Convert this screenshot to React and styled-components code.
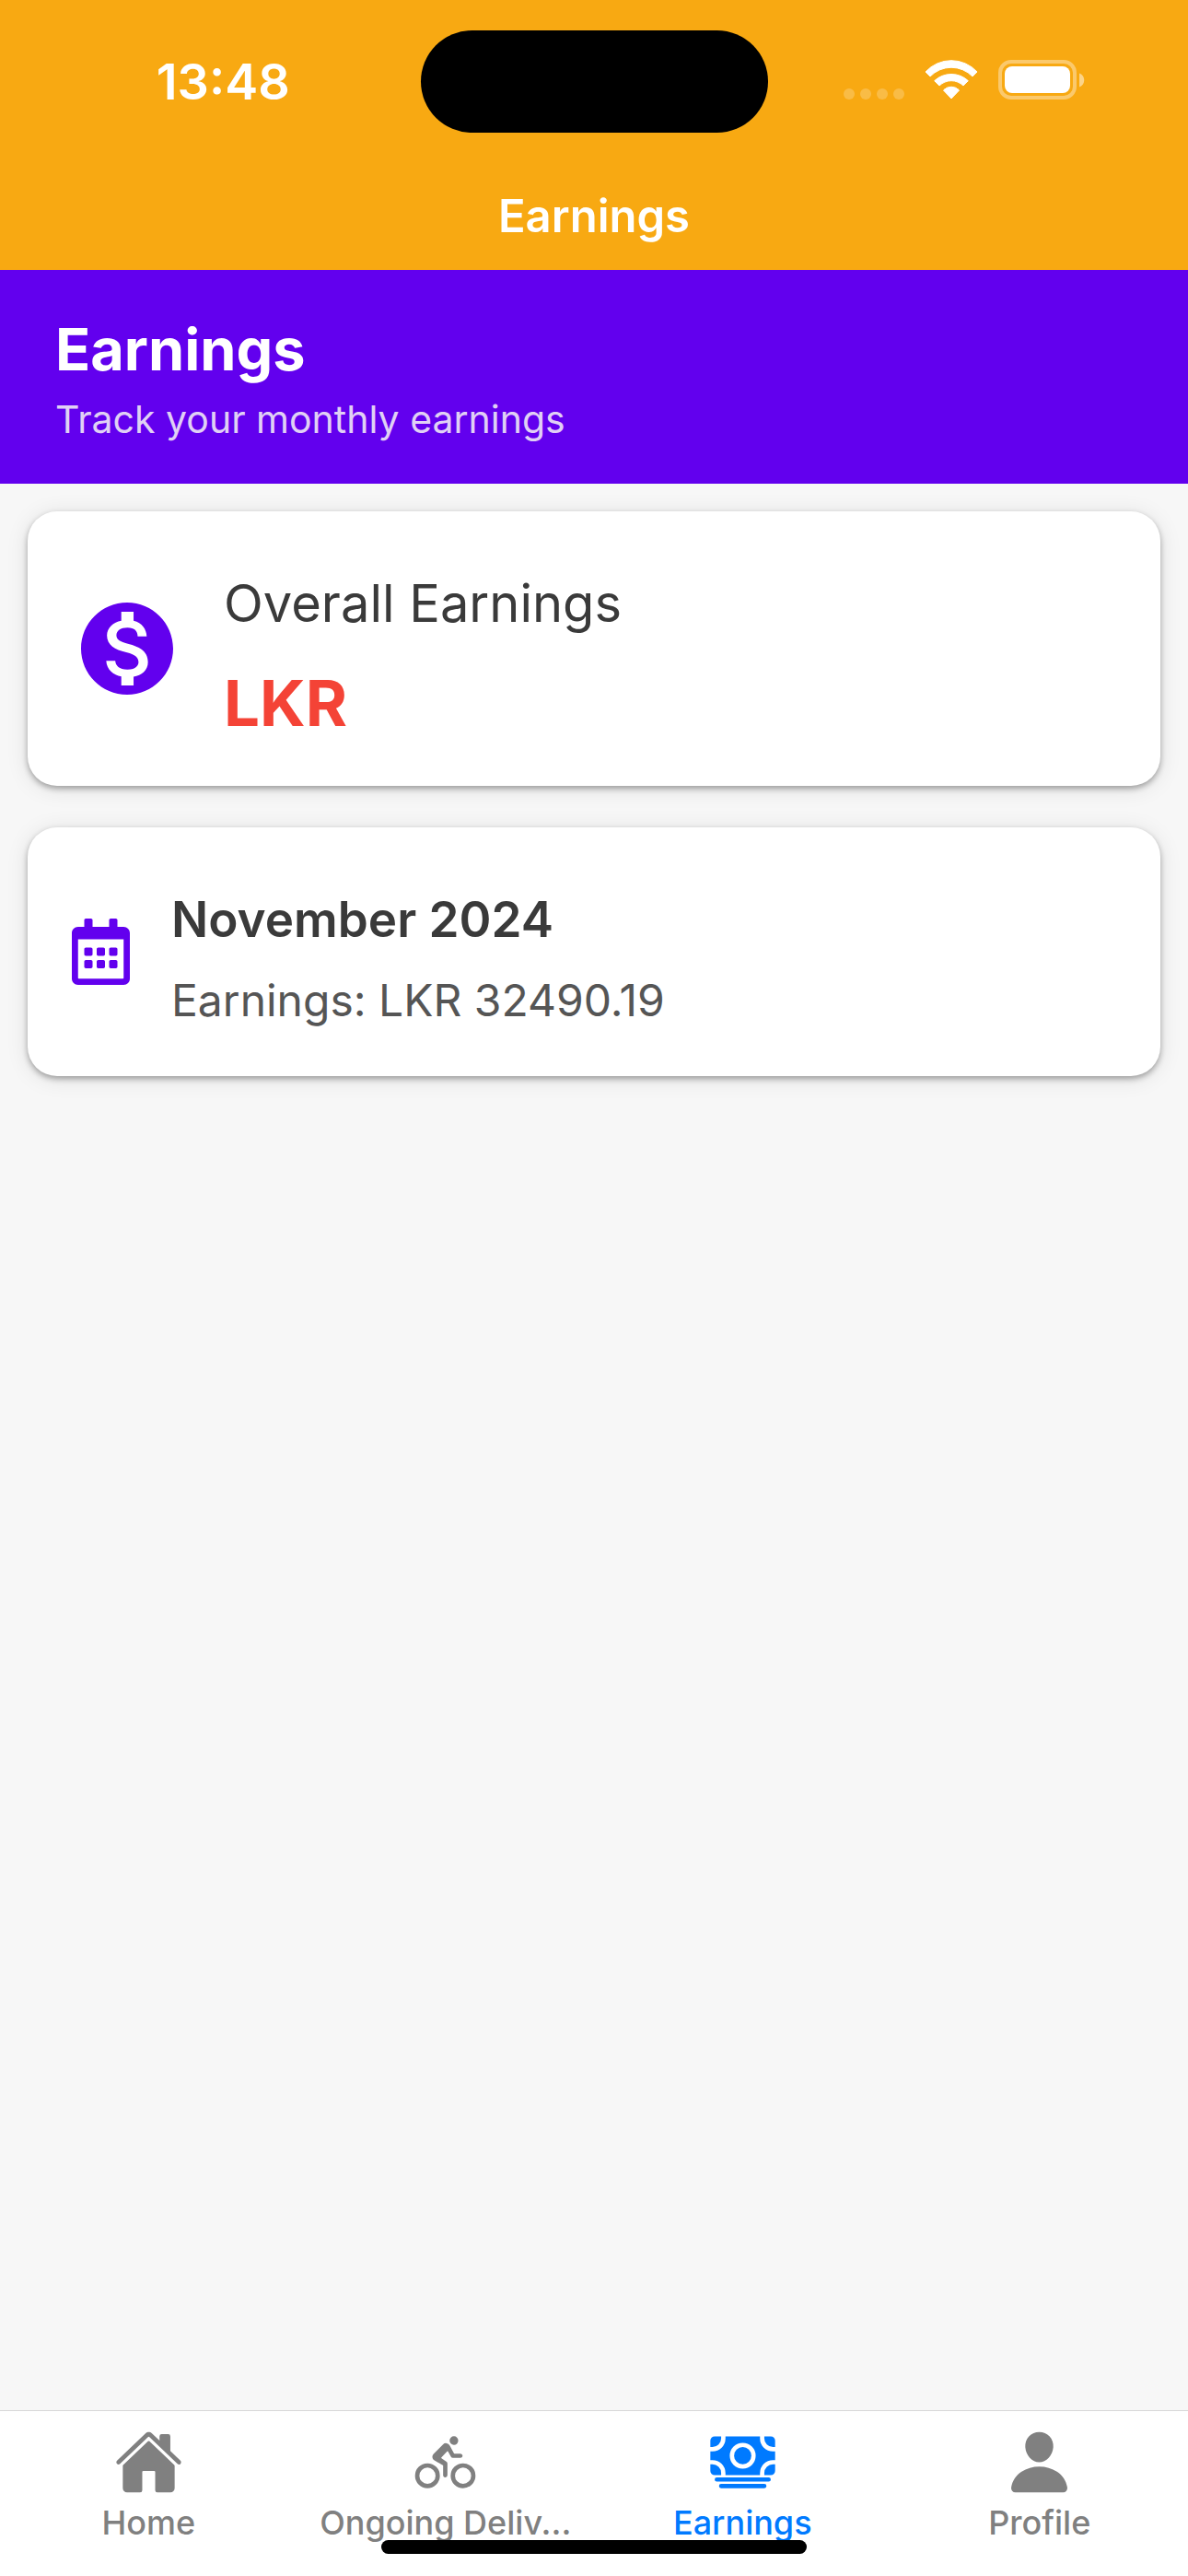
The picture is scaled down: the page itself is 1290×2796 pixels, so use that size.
import React, { useState } from "react";
import styled, { createGlobalStyle } from "styled-components";
import { MdMonetizationOn } from "react-icons/md";
import { FaRegCalendarAlt } from "react-icons/fa";
import { IoHome, IoBicycle, IoCash, IoPerson } from "react-icons/io5";

const colors = {
  header: "#f8a912",
  primary: "#6200ee",
  danger: "#f44336",
  active: "#007aff",
  inactive: "#808080",
  background: "#f7f7f7",
  title: "#3a3a3a",
  text: "#555555",
};

const tabs = [
  { name: "Home", icon: IoHome },
  { name: "Ongoing Deliv...", icon: IoBicycle },
  { name: "Earnings", icon: IoCash },
  { name: "Profile", icon: IoPerson },
];

const months = [{ month: "November 2024", amount: "32490.19" }];

const StatusIcons = () => (
  <StatusIconsStyled>
    <svg width="66" height="12" viewBox="0 0 66 12" fill="#fff" opacity="0.22">
      <circle cx="6" cy="6" r="6" />
      <circle cx="24" cy="6" r="6" />
      <circle cx="42" cy="6" r="6" />
      <circle cx="60" cy="6" r="6" />
    </svg>
    <svg
      width="58"
      height="43"
      viewBox="0 0 58 43"
      fill="#fff"
      stroke="#fff"
      strokeWidth="1"
      strokeLinejoin="round"
    >
      <path d="M1 13A38 38 0 0 1 57 13L52 18A32 32 0 0 0 6 18Z" />
      <path d="M10.700 22.700A26.800 26.800 0 0 1 47.300 22.700L42 28A18.600 18.600 0 0 0 16 28Z" />
      <path d="M20.500 33A11.500 11.500 0 0 1 37.500 33L29 42Z" />
    </svg>
    <svg width="94" height="43" viewBox="0 0 94 43" fill="#fff">
      <rect
        x="2"
        y="2"
        width="81"
        height="39"
        rx="12"
        fill="none"
        stroke="#fff"
        strokeWidth="4"
        opacity="0.38"
      />
      <rect x="7" y="7" width="71" height="29" rx="8" />
      <path d="M88 14.500C95 17 95 27 88 29.500Z" opacity="0.5" />
    </svg>
  </StatusIconsStyled>
);

const App = () => {
  const [active, setActive] = useState("Earnings");

  return (
    <Screen>
      <GlobalStyle />
      <Header>
        <StatusBar>
          <Clock>13:48</Clock>
          <Island />
          <StatusIcons />
        </StatusBar>
        <NavTitle>Earnings</NavTitle>
      </Header>
      <Banner>
        <BannerTitle>Earnings</BannerTitle>
        <BannerSubtitle>Track your monthly earnings</BannerSubtitle>
      </Banner>
      <Content>
        <Card>
          <MdMonetizationOn size={120} />
          <Summary>
            <SummaryTitle>Overall Earnings</SummaryTitle>
            <SummaryAmount>LKR</SummaryAmount>
          </Summary>
        </Card>
        {months.map(({ month, amount }) => (
          <Card key={month}>
            <CalendarIcon />
            <Month>
              <MonthTitle>{month}</MonthTitle>
              <MonthAmount>Earnings: LKR {amount}</MonthAmount>
            </Month>
          </Card>
        ))}
      </Content>
      <TabBar>
        {tabs.map(({ name, icon: Icon }) => (
          <Tab
            key={name}
            type="button"
            $active={active === name}
            onClick={() => setActive(name)}
          >
            <Icon size={75} />
            <span>{name}</span>
          </Tab>
        ))}
        <HomeIndicator />
      </TabBar>
    </Screen>
  );
};

export default App;

const GlobalStyle = createGlobalStyle`
  * {
    box-sizing: border-box;
  }
  body {
    margin: 0;
    font-family: Inter, "Liberation Sans", sans-serif;
    background-color: ${colors.background};
  }
  h1, h2, h3, p {
    margin: 0;
  }
`;

const Screen = styled.div`
  display: flex;
  flex-direction: column;
  min-height: 100vh;
`;

const Header = styled.header`
  background-color: ${colors.header};
  color: #ffffff;
`;

const StatusBar = styled.div`
  display: grid;
  grid-template-columns: 1fr auto 1fr;
  align-items: center;
  height: 177px;
`;

const Clock = styled.time`
  padding-left: 28px;
  font-size: 54px;
  font-weight: 600;
  line-height: 60px;
  text-align: center;
`;

const Island = styled.div`
  width: 377px;
  height: 111px;
  border-radius: 56px;
  background-color: #000000;
`;

const StatusIconsStyled = styled.div`
  display: flex;
  justify-content: flex-end;
  align-items: flex-end;
  gap: 22px;
  padding: 0 112px 4px 0;
`;

const NavTitle = styled.h1`
  font-size: 49px;
  font-weight: 600;
  line-height: 116px;
  text-align: center;
`;

const Banner = styled.section`
  display: flex;
  flex-direction: column;
  gap: 6px;
  padding: 46px 60px 40px;
  background-color: ${colors.primary};
  color: #ffffff;
`;

const BannerTitle = styled.h2`
  font-size: 63px;
  font-weight: 700;
  line-height: 80px;
`;

const BannerSubtitle = styled.p`
  font-size: 41px;
  line-height: 60px;
  color: #e0d0f5;
`;

const Content = styled.main`
  flex: 1;
  display: flex;
  flex-direction: column;
  gap: 45px;
  padding: 30px;
`;

const Card = styled.article`
  display: flex;
  align-items: center;
  gap: 45px;
  padding: 50px 48px;
  border-radius: 32px;
  background-color: #ffffff;
  box-shadow: 0 3px 6px rgba(0, 0, 0, 0.32), 0 3px 24px rgba(0, 0, 0, 0.1);
  & > svg {
    flex: none;
    color: ${colors.primary};
  }
`;

const CalendarIcon = styled(FaRegCalendarAlt)`
  width: 63px;
  height: 72px;
`;

const Summary = styled.div`
  display: flex;
  flex-direction: column;
  gap: 18px;
`;

const SummaryTitle = styled.h3`
  font-size: 56px;
  font-weight: 400;
  line-height: 100px;
  color: ${colors.title};
`;

const SummaryAmount = styled.p`
  font-size: 69px;
  font-weight: 700;
  line-height: 80px;
  color: ${colors.danger};
`;

const Month = styled.div`
  display: flex;
  flex-direction: column;
  gap: 6px;
`;

const MonthTitle = styled.h3`
  font-size: 53px;
  font-weight: 600;
  line-height: 100px;
  color: ${colors.title};
`;

const MonthAmount = styled.p`
  font-size: 48px;
  line-height: 64px;
  color: ${colors.text};
`;

const TabBar = styled.nav`
  position: relative;
  display: grid;
  grid-template-columns: repeat(4, 1fr);
  height: 180px;
  border-top: 1px solid #d8d8d8;
  background-color: #ffffff;
`;

const Tab = styled.button`
  display: flex;
  flex-direction: column;
  align-items: center;
  gap: 6px;
  min-width: 0;
  padding: 18px 0 0;
  border: none;
  background: none;
  font-family: inherit;
  font-size: 36px;
  font-weight: 500;
  line-height: 44px;
  white-space: nowrap;
  cursor: pointer;
  color: ${(props) => (props.$active ? colors.active : colors.inactive)};
`;

const HomeIndicator = styled.div`
  position: absolute;
  left: 50%;
  bottom: 24px;
  width: 462px;
  height: 15px;
  border-radius: 8px;
  background-color: #000000;
  transform: translateX(-50%);
`;
